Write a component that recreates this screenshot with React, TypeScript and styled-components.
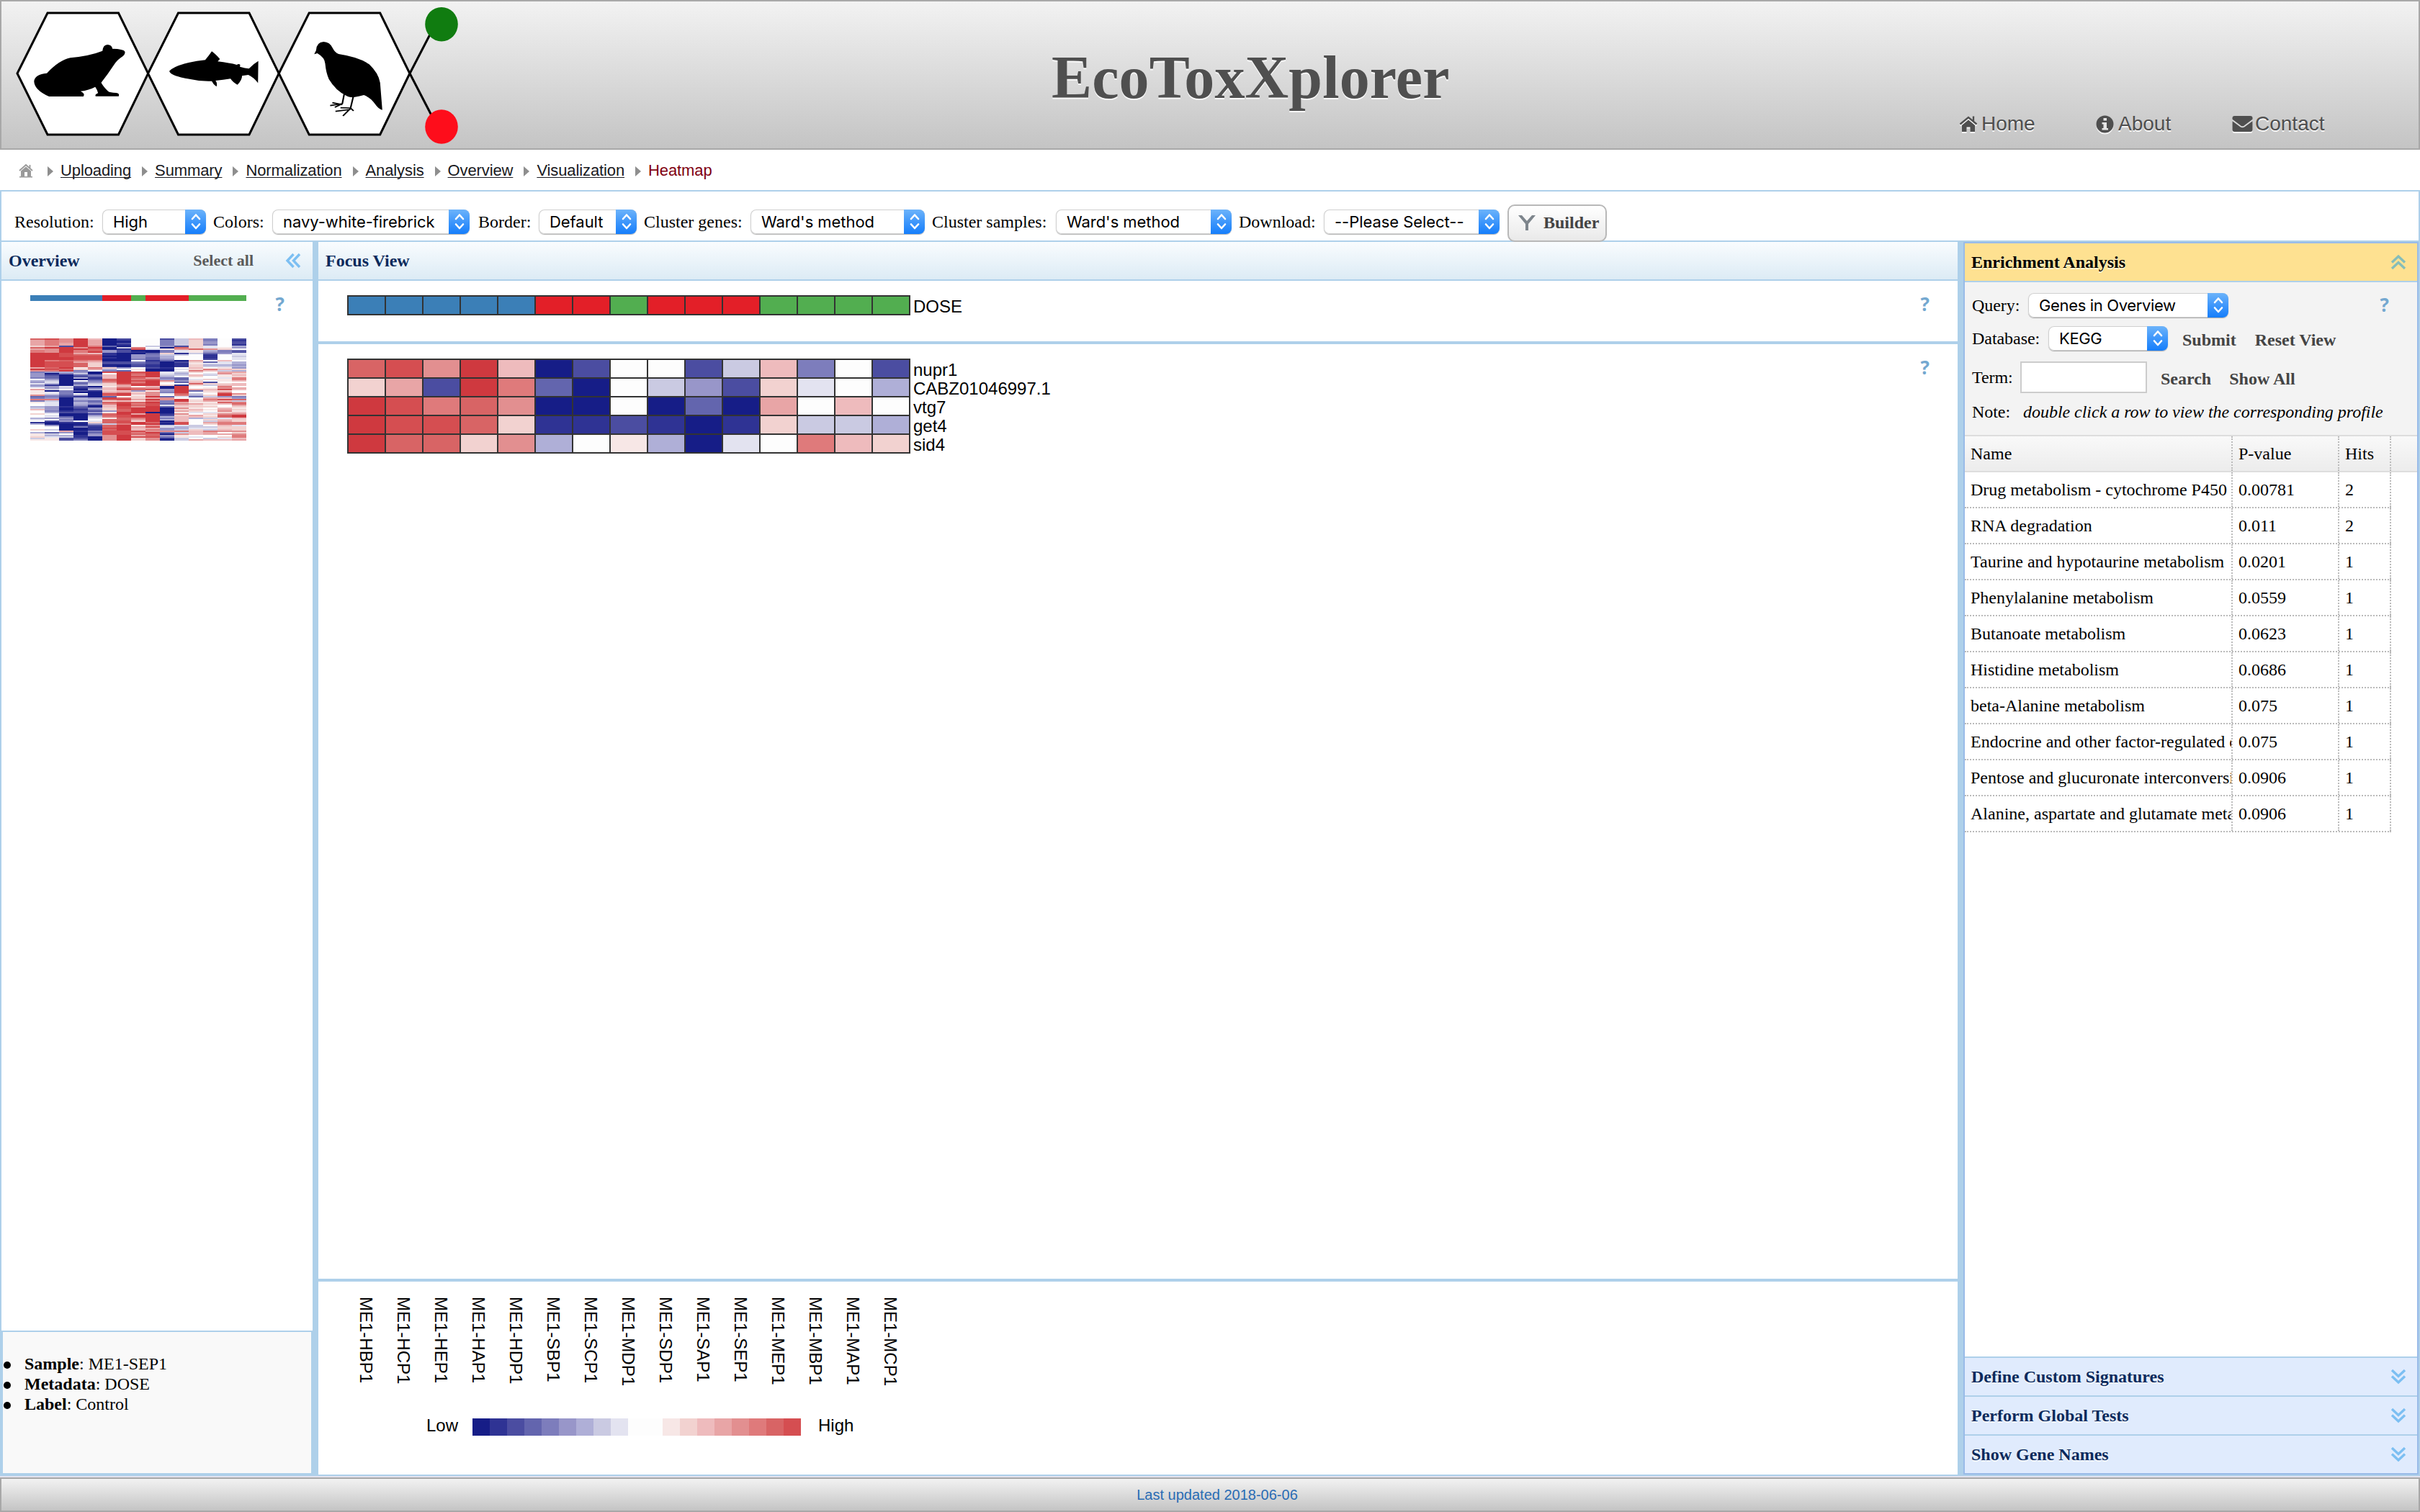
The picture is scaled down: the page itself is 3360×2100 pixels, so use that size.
import React from "react";
import styled, { createGlobalStyle, css } from "styled-components";

const serif = `"Liberation Serif", "Times New Roman", serif`;
const sans = `"Liberation Sans", Arial, sans-serif`;
const line = "#aed0ea";

const GlobalStyle = createGlobalStyle`
  *, *::before, *::after { box-sizing: border-box; }
  body { margin: 0; background: #fff; font: 24px/28px ${serif}; color: #000; }
`;

/* Navy to firebrick scale, one letter per step. */
const SCALE: Record<string, string> = {
  a: "#161d87", b: "#2f3394", c: "#4b4da1", d: "#6365ae", e: "#7d7dbc",
  f: "#9896c9", g: "#afafd7", h: "#cacae2", i: "#e3e3f0", j: "#fdfdfd",
  l: "#f7e7e6", m: "#f2d2d0", n: "#eebbbd", o: "#e8a5a6", p: "#e28f90",
  q: "#df7a7b", r: "#d86465", s: "#d54e51", t: "#cf393f",
  B: "#3b7fb7", R: "#e31f28", G: "#52ae50",
};

const DOSE = "BBBBBRRGRRRGGGG";
const GENES = [
  { name: "nupr1", cells: "rsptnacjjchnejc" },
  { name: "CABZ01046997.1", cells: "moctqdajhfcmijg" },
  { name: "vtg7", cells: "tsqrpaajadaojnj" },
  { name: "get4", cells: "tssrmbbcbabmhhg" },
  { name: "sid4", cells: "trrmpgjlgaijqnm" },
];
const SAMPLES = [
  "ME1-HBP1", "ME1-HCP1", "ME1-HEP1", "ME1-HAP1", "ME1-HDP1", "ME1-SBP1", "ME1-SCP1", "ME1-MDP1",
  "ME1-SDP1", "ME1-SAP1", "ME1-SEP1", "ME1-MEP1", "ME1-MBP1", "ME1-MAP1", "ME1-MCP1",
];
const OVERVIEW = `
rsptnacjjchnejc oqptoabjjehmejb oqptoaajjehmfjc oqotoacjjehmfjc oqotoabjjehmejb moctqdajhfcmijg
rttptahqjarmilf opttrabsilprpmj qptqrfcaaeilged qptqtfcbaeilfec ttsonbaadmbhdfi ttsrrbafehhjbji
ttsssaafegjjbjh tttssbafdgjjbji tttssaaedfjjcji tqrqpaajbdaojnj tssonccecacmdig tssrmccdcabliig
tssrmaacbabmggf tssrmbacbabmhhg ortlqmfjcbjnjlf tsrmogjlaaimqnm pqtejedjaajqnhg efgfaststihmjoo
faehajtrtigjipm fcadentqthhnhln fdacdntstgjmjlm edagbntroedjjiq jfaacrtqrfdimlq ghajertstpfmjln
fiaefptqtldncjj igadhmsstjjrmmn fbagimottmbmhnn gficalojnatjjqj jfhbenrqpatjlpo ohjagnsrsftonsn
laecbmnflftdmmj lieaaopmpetjlpj liejastnpirhjtp pfdfarslpjqgmtm decbadjmtdidhfe efagftrmopjjonf
qqaggrsotptlqsr ehaedmnlqetmonh liagersrteollrq jiagfqtqsdpomnr jiafbntrsinmljo gfbdansptdmmmjm
hfacfmsttapljnl nfabemrttamnlom jebccfrttaomjpl jgccflttaaliimn mjaacrtotbpjmpp jiaafrsttcmolrt
jidahqsttgnnmrt gffailrqtenghin ijeajrrotgnjmnm jcfjirsmtanjhom babbmrstrbsjoqq gaaafhqttasjmqq
jfabcrtlphihjni jjaebrtosighhmm jjaabstnofgiimm mhaabrtnqfhmhnm jjobesssppqnqpp gdfadssqtdhnojm
lhjafssrrapnoop lggbfptorfljjjq mihbaptsselijmq hlccaptmpbhjhin llceaptmpahonno
`.trim().split(/\s+/);

const CRUMBS = ["Uploading", "Summary", "Normalization", "Analysis", "Overview", "Visualization"];

const FIELDS = [
  { label: "Resolution:", value: "High", span: 276, width: 144, gap: 10 },
  { label: "Colors:", value: "navy-white-firebrick", span: 368, width: 274, gap: 12 },
  { label: "Border:", value: "Default", span: 230, width: 136, gap: 10 },
  { label: "Cluster genes:", value: "Ward's method", span: 400, width: 242, gap: 10 },
  { label: "Cluster samples:", value: "Ward's method", span: 426, width: 244, gap: 10 },
  { label: "Download:", value: "--Please Select--", span: 373, width: 244, gap: 11 },
];

const PATHWAYS: [string, string, string][] = [
  ["Drug metabolism - cytochrome P450", "0.00781", "2"],
  ["RNA degradation", "0.011", "2"],
  ["Taurine and hypotaurine metabolism", "0.0201", "1"],
  ["Phenylalanine metabolism", "0.0559", "1"],
  ["Butanoate metabolism", "0.0623", "1"],
  ["Histidine metabolism", "0.0686", "1"],
  ["beta-Alanine metabolism", "0.075", "1"],
  ["Endocrine and other factor-regulated c", "0.075", "1"],
  ["Pentose and glucuronate interconversi", "0.0906", "1"],
  ["Alanine, aspartate and glutamate meta", "0.0906", "1"],
];

const Page = styled.div`
  width: 3360px; height: 2100px; display: flex; flex-direction: column; overflow: hidden;
`;
const Banner = styled.header`
  height: 208px; flex: none; border: 2px solid #a8a8a8;
  background: linear-gradient(#f2f2f2, #c4c4c4);
  display: grid; grid-template-columns: 1458px 1fr 1256px; color: #4f4f4f;
  text-shadow: 0 2px 0 rgba(255, 255, 255, 0.85);
`;
const Title = styled.h1`
  margin: 0; padding-top: 52px; font: bold 84px/108px ${serif}; letter-spacing: 0.15px; white-space: nowrap;
`;
const Nav = styled.nav`
  display: flex; align-items: flex-start; padding: 154px 0 0 618px; font: 28px/32px ${sans};
`;
const NavLink = styled.a<{ $w: number; $gap: number }>`
  display: flex; align-items: center; gap: ${(p) => p.$gap}px; width: ${(p) => p.$w}px; white-space: nowrap;
  svg { flex: none; filter: drop-shadow(0 2px 0 rgba(255, 255, 255, 0.8)); }
`;
const Crumbs = styled.nav`
  height: 56px; flex: none; display: flex; align-items: center; padding: 4px 0 3px 26px;
  font: 22px/26px ${sans}; letter-spacing: -0.11px; color: #1a1a22;
`;
const Crumb = styled.a<{ $current?: boolean }>`
  color: ${(p) => (p.$current ? "#800010" : "inherit")};
  text-decoration: ${(p) => (p.$current ? "none" : "underline")};
  text-decoration-skip-ink: none; text-underline-offset: 2px; text-decoration-thickness: 1px;
`;
const CrumbArrow = styled.i<{ $first?: boolean }>`
  width: 0; height: 0; margin: 2px 10px 0 ${(p) => (p.$first ? 20 : 15)}px;
  border-left: 8px solid #8e8e8e; border-top: 7px solid transparent; border-bottom: 7px solid transparent;
`;
const Toolbar = styled.div`
  height: 72px; flex: none; display: flex; align-items: center; padding: 16px 0 0 18px;
  border: 2px solid ${line};
`;
const Field = styled.label<{ $w: number; $gap: number }>`
  width: ${(p) => p.$w}px; padding-right: ${(p) => p.$gap}px; display: flex; align-items: center;
  justify-content: space-between; white-space: nowrap;
`;
const SelectBox = styled.span<{ $w: number; $tight?: boolean }>`
  width: ${(p) => p.$w}px; height: 34px; flex: none; display: flex; align-items: stretch; justify-content: space-between;
  background: #fff; border-radius: 8px; overflow: hidden; padding-left: 15px;
  box-shadow: inset 0 0 0 1px #d0d0d0, 0 1px 1px rgba(0, 0, 0, 0.3);
  font: 22px/35px Inter, ${sans}; letter-spacing: ${(p) => (p.$tight ? -0.35 : -0.05)}px;
  color: #000; white-space: nowrap;
`;
const Stepper = styled.span`
  width: 29px; display: flex; align-items: center; justify-content: center;
  background: linear-gradient(#6cb3fa, #3f97fb 50%, #157efb);
`;
const BuilderButton = styled.button`
  width: 138px; height: 52px; margin-top: 4px; flex: none; position: relative; display: flex; align-items: center;
  padding: 0 0 2px 12px; gap: 10px; border: 2px solid #b8b8b8; border-radius: 10px;
  background: linear-gradient(#ffffff, #e9e9e9); color: #444; font: bold 24px/28px ${serif};
`;
const Work = styled.main`
  height: 1714px; flex: none; display: grid; grid-template-columns: 432px 2276px 632px; column-gap: 8px;
  padding: 0 2px 2px; background: ${line};
`;
const Column = styled.section`
  display: flex; flex-direction: column; background: #fff; min-width: 0;
`;
const PaneHeader = styled.header`
  height: 54px; flex: none; display: flex; align-items: center; padding: 0 15px 0 10px;
  border-bottom: 2px solid ${line}; background: linear-gradient(#f9fcfe, #dcebf5);
  color: #0b2a5c; font-weight: bold;
`;
const SelectAll = styled.a`
  margin: 0 43px 0 auto; font-size: 22px; color: #5a5a5a;
`;
const Help = styled.span`
  font: bold 26px/28px "Open Sans", ${sans}; color: #74a8d0; margin-top: -2px;
`;
const OverviewArea = styled.div`
  flex: 1; display: flex; justify-content: space-between; padding: 20px 39px 0 40px;
`;
const InfoBox = styled.div`
  height: 200px; flex: none; border: 2px solid ${line}; background: #f9f9f9;
  ul { margin: 0; padding: 30px 0 0 30px; list-style: none; }
  li { display: flex; white-space: pre; }
  li::before { content: ""; width: 10px; height: 10px; border-radius: 5px; background: #000; margin: 11px 19px 0 -29px; }
`;
const Section = styled.div<{ $h?: number }>`
  ${(p) => (p.$h ? css`height: ${p.$h}px; flex: none;` : css`flex: 1;`)}
  display: flex; justify-content: space-between; align-items: flex-start; padding: 20px 39px 0 40px;
`;
const Divider = styled.div`
  height: 4px; flex: none; background: ${line};
`;
const Plot = styled.div`
  display: flex; gap: 4px;
`;
const RowNames = styled.div`
  font: 24px/26px ${sans}; padding-top: 3px;
`;
const SamplePane = styled.div`
  height: 268px; flex: none; padding: 21px 0 0 40px;
`;
const SampleNames = styled.div`
  display: grid; grid-template-columns: repeat(15, 52px); height: 169px;
  span { writing-mode: vertical-rl; line-height: 52px; font-family: ${sans}; white-space: nowrap; }
`;
const Legend = styled.div`
  display: flex; align-items: center; height: 24px; padding-left: 110px; font: 24px/24px ${sans};
`;
const LegendLabel = styled.span<{ $w: number }>`
  width: ${(p) => p.$w}px; margin-top: -4px;
`;
const Swatch = styled.i<{ $c: string }>`
  width: 24px; height: 24px; background: ${(p) => p.$c};
`;
const LegendEnd = styled.span`
  margin: -4px 0 0 24px;
`;
const Accordion = styled.aside`
  display: flex; flex-direction: column; border: 2px solid #99bbe8; background: #fff; min-width: 0;
`;
const AccordionHead = styled.header<{ $open?: boolean }>`
  height: 54px; flex: none; display: flex; align-items: center; justify-content: space-between;
  padding: 0 14px 0 9px; font-weight: bold; text-shadow: 0 2px 0 rgba(255, 255, 255, 0.7);
  background: ${(p) => (p.$open ? "#fee191" : "#e0ebfd")};
  color: ${(p) => (p.$open ? "#000" : "#0b2a5c")};
  ${(p) => (p.$open ? `border-bottom: 2px solid ${line};` : `border-top: 2px solid ${line};`)}
`;
const Form = styled.form`
  height: 212px; flex: none; padding: 9px 38px 0 10px; background: #f3f3f3;
`;
const FormRow = styled.div<{ $h: number }>`
  height: ${(p) => p.$h}px; display: flex; align-items: center; white-space: nowrap;
`;
const FormLabel = styled.label<{ $w: number }>`
  width: ${(p) => p.$w}px; flex: none; letter-spacing: -0.05px;
`;
const Action = styled.a<{ $ml: number }>`
  margin: 4px 0 0 ${(p) => p.$ml}px; font-weight: bold; color: #444;
`;
const TermInput = styled.input`
  width: 176px; height: 44px; border: 2px solid #ccc; background: #fff; margin: 0; padding: 0 6px;
`;
const Note = styled.i`
  letter-spacing: -0.03px;
`;
const HelpEnd = styled(Help)`
  margin-left: auto; margin-right: 1px;
`;
const TableHead = styled.div`
  height: 52px; flex: none; display: grid; grid-template-columns: 372px 148px 72px;
  border-top: 2px solid #ddd; border-bottom: 2px solid #ddd; background: linear-gradient(#f9f9f9, #ececec);
`;
const TableRow = styled.div`
  width: 592px; height: 50px; flex: none; display: grid; grid-template-columns: 372px 148px 72px;
  border-bottom: 2px dotted #bbb;
`;
const Cell = styled.span`
  border-right: 2px dotted #bbb; padding-left: 8px; line-height: 48px; white-space: nowrap; overflow: hidden;
`;
const TableBody = styled.div`
  flex: 1; overflow: hidden;
`;
const Footer = styled.footer`
  height: 50px; flex: none; border-top: 2px solid #e2e2ee;
  div {
    height: 48px; border: 2px solid #a8a8a8; background: linear-gradient(#f2f2f2, #c4c4c4);
    text-align: center; font: 20px/44px ${sans}; color: #2a6cb4; padding-left: 20px;
  }
`;

function Logo() {
  const hex = (x: number) =>
    `M${x} 102L${x + 42} 18H${x + 140.5}L${x + 181.7} 102L${x + 140.5} 187H${x + 42}Z`;
  return (
    <svg width="660" height="204" viewBox="2 2 660 204">
      <g fill="#fff" stroke="#000" strokeWidth="3">
        <path d={hex(24)} /><path d={hex(205.5)} /><path d={hex(387.2)} />
        <path d="M569 102L598 46M569 102L599 160" fill="none" />
      </g>
      <ellipse cx="613" cy="33.7" rx="22.8" ry="23.8" fill="#107c10" />
      <ellipse cx="613" cy="176" rx="22.8" ry="23.8" fill="#fe0d1b" />
      <g transform="scale(.43367 .33333)">
        <path d="M157 402H267Q274 390 258 380Q285 376 305 362Q312 375 314 388Q303 393 306 401H380Q384 389 372 387Q352 386 346 380Q330 360 324 344Q345 310 365 270Q375 250 387 240Q402 228 400 215Q396 204 360 203Q358 187 344 186Q330 187 328 212Q290 232 225 241Q190 250 150 305Q112 310 109 338Q110 375 157 402Z" />
        <path d="M542 296Q560 270 630 254L657 250Q670 230 678 214Q690 225 704 246L697 256Q735 262 758 270Q765 264 769 270L768 278Q785 284 797 286Q812 265 827 254L826 346Q812 322 795 312L775 316Q775 335 760 353Q747 345 738 328Q715 333 690 336Q697 345 693 361Q682 350 678 338Q640 340 600 328Q545 314 542 296Z" />
        <path d="M1006 226L1012 210Q1013 176 1036 174Q1056 175 1065 200Q1072 218 1084 225Q1150 238 1182 268Q1212 305 1217 345L1224 458Q1212 455 1200 432Q1185 405 1165 396Q1150 402 1130 406Q1115 405 1108 398Q1075 378 1053 330Q1044 305 1041 265Q1040 240 1016 222Z" />
        <path d="M1102 392L1096 432L1072 447M1096 432L1057 440M1096 436L1064 428M1131 403L1122 452L1098 483M1122 456L1074 464M1122 450L1090 449M1122 450L1132 462" fill="none" stroke="#000" strokeWidth="5" />
      </g>
    </svg>
  );
}

const Heat = ({ rows, w, h, grid }: { rows: string[]; w: number; h: number; grid?: boolean }) => {
  const o = grid ? 2 : 0;
  return (
    <svg width={15 * w + o} height={rows.length * h + o} shapeRendering="crispEdges">
      {grid && <rect width="100%" height="100%" fill="#333" />}
      {rows.map((r, y) =>
        [...r].map((c, x) => (
          <rect key={`${x}-${y}`} x={x * w + o} y={y * h + o} width={w - o} height={h - o} fill={SCALE[c]} />
        )),
      )}
    </svg>
  );
};

const OverviewChart = styled.div`
  display: flex; flex-direction: column; gap: 52px;
`;

const Select = ({ value, width, tight }: { value: string; width: number; tight?: boolean }) => (
  <SelectBox $w={width} $tight={tight}>
    {value}
    <Stepper>
      <svg width="16" height="24" fill="none" stroke="#fff" strokeWidth="2.6" strokeLinecap="round" strokeLinejoin="round">
        <path d="M3 8L8 2.5L13 8M3 15.5L8 21L13 15.5" />
      </svg>
    </Stepper>
  </SelectBox>
);

const Chevrons = ({ turn = 0, color = "#7cbff2" }: { turn?: number; color?: string }) => (
  <svg width="24" height="22" viewBox="0 0 24 22" fill="none" stroke={color} strokeWidth="3.4">
    <path transform={`rotate(${turn} 12 11)`} d="M3 2L12 10.5L21 2M3 10.500L12 19L21 10.500" />
  </svg>
);

export default function App() {
  return (
    <Page>
      <GlobalStyle />
      <Banner>
        <Logo />
        <Title>EcoToxXplorer</Title>
        <Nav>
          <NavLink $w={190} $gap={5}>
            <svg width="26" height="24" viewBox="0 0 26 24" fill="#4f4f4f">
              <path d="M13 6.500L22 14V23H15.500V16.500H10.500V23H4V14Z" />
              <path d="M1.500 12.500L13 3L24.500 12.500M20 1.500V8" fill="none" stroke="#4f4f4f" strokeWidth="2.400" />
            </svg>
            Home
          </NavLink>
          <NavLink $w={189} $gap={6}>
            <svg width="25" height="25" viewBox="0 0 25 25">
              <circle cx="12.500" cy="12.500" r="12" fill="#4f4f4f" />
              <path d="M10.500 4H15V7.500H10.500ZM8.500 10H15V18H17V20.500H8.500V18H10.500V12.500H8.500Z" fill="#e6e6e6" />
            </svg>
            About
          </NavLink>
          <NavLink $w={140} $gap={3}>
            <svg width="29" height="24" viewBox="0 0 29 24">
              <rect x="0.500" y="1" width="28" height="22" rx="3" fill="#4f4f4f" />
              <path d="M0 6.500L12 15.500Q14.500 17 17 15.500L29 6.500" fill="none" stroke="#d8d8d8" strokeWidth="2" />
            </svg>
            Contact
          </NavLink>
        </Nav>
      </Banner>
      <Crumbs>
        <svg width="20" height="20" viewBox="0 0 20 20" fill="#999">
          <path d="M10 4.500L17 10.500V18H19V19.500H1V18H3V10.500Z" />
          <path d="M1 10L10 2L19 10M15.500 2V6" fill="none" stroke="#999" strokeWidth="1.800" />
          <path d="M8 12H12V18H8Z" fill="#fff" />
        </svg>
        {CRUMBS.map((c, i) => (
          <React.Fragment key={c}>
            <CrumbArrow $first={i === 0} />
            <Crumb>{c}</Crumb>
          </React.Fragment>
        ))}
        <CrumbArrow />
        <Crumb $current>Heatmap</Crumb>
      </Crumbs>
      <Toolbar>
        {FIELDS.map((f) => (
          <Field key={f.label} $w={f.span} $gap={f.gap}>
            {f.label}
            <Select value={f.value} width={f.width} />
          </Field>
        ))}
        <BuilderButton>
          <svg width="26" height="24" viewBox="0 0 26 24" fill="#7d858c">
            <path d="M1 2H6L13 10L20 2H25L15 14V23H11V14Z" />
          </svg>
          Builder
        </BuilderButton>
      </Toolbar>
      <Work>
        <Column>
          <PaneHeader>
            Overview
            <SelectAll>Select all</SelectAll>
            <Chevrons turn={90} />
          </PaneHeader>
          <OverviewArea>
            <OverviewChart>
              <Heat rows={[DOSE]} w={20} h={8} />
              <Heat rows={OVERVIEW} w={20} h={2} />
            </OverviewChart>
            <Help>?</Help>
          </OverviewArea>
          <InfoBox>
            <ul>
              <li><b>Sample</b>: ME1-SEP1</li>
              <li><b>Metadata</b>: DOSE</li>
              <li><b>Label</b>: Control</li>
            </ul>
          </InfoBox>
        </Column>
        <Column>
          <PaneHeader>Focus View</PaneHeader>
          <Section $h={84}>
            <Plot>
              <Heat rows={[DOSE]} w={52} h={26} grid />
              <RowNames>DOSE</RowNames>
            </Plot>
            <Help>?</Help>
          </Section>
          <Divider />
          <Section>
            <Plot>
              <Heat rows={GENES.map((g) => g.cells)} w={52} h={26} grid />
              <RowNames>
                {GENES.map((g) => <div key={g.name}>{g.name}</div>)}
              </RowNames>
            </Plot>
            <Help>?</Help>
          </Section>
          <Divider />
          <SamplePane>
            <SampleNames>
              {SAMPLES.map((s) => <span key={s}>{s}</span>)}
            </SampleNames>
            <Legend>
              <LegendLabel $w={64}>Low</LegendLabel>
              {[..."abcdefghijjlmnopqrs"].map((c, i) => <Swatch key={i} $c={SCALE[c]} />)}
              <LegendEnd>High</LegendEnd>
            </Legend>
          </SamplePane>
        </Column>
        <Accordion>
          <AccordionHead $open>
            Enrichment Analysis
            <Chevrons turn={180} color="#85bdb9" />
          </AccordionHead>
          <Form>
            <FormRow $h={46}>
              <FormLabel $w={78}>Query:</FormLabel>
              <Select value="Genes in Overview" width={278} tight />
              <HelpEnd>?</HelpEnd>
            </FormRow>
            <FormRow $h={46}>
              <FormLabel $w={106}>Database:</FormLabel>
              <Select value="KEGG" width={166} tight />
              <Action $ml={20}>Submit</Action>
              <Action $ml={26}>Reset View</Action>
            </FormRow>
            <FormRow $h={62}>
              <FormLabel $w={67}>Term:</FormLabel>
              <TermInput />
              <Action $ml={19}>Search</Action>
              <Action $ml={25}>Show All</Action>
            </FormRow>
            <FormRow $h={34}>
              <FormLabel $w={71}>Note:</FormLabel>
              <Note>double click a row to view the corresponding profile</Note>
            </FormRow>
          </Form>
          <TableHead>
            <Cell>Name</Cell><Cell>P-value</Cell><Cell>Hits</Cell>
          </TableHead>
          <TableBody>
            {PATHWAYS.map(([name, p, hits]) => (
              <TableRow key={name}>
                <Cell>{name}</Cell><Cell>{p}</Cell><Cell>{hits}</Cell>
              </TableRow>
            ))}
          </TableBody>
          {["Define Custom Signatures", "Perform Global Tests", "Show Gene Names"].map((t) => (
            <AccordionHead key={t}>
              {t}
              <Chevrons />
            </AccordionHead>
          ))}
        </Accordion>
      </Work>
      <Footer><div>Last updated 2018-06-06</div></Footer>
    </Page>
  );
}
